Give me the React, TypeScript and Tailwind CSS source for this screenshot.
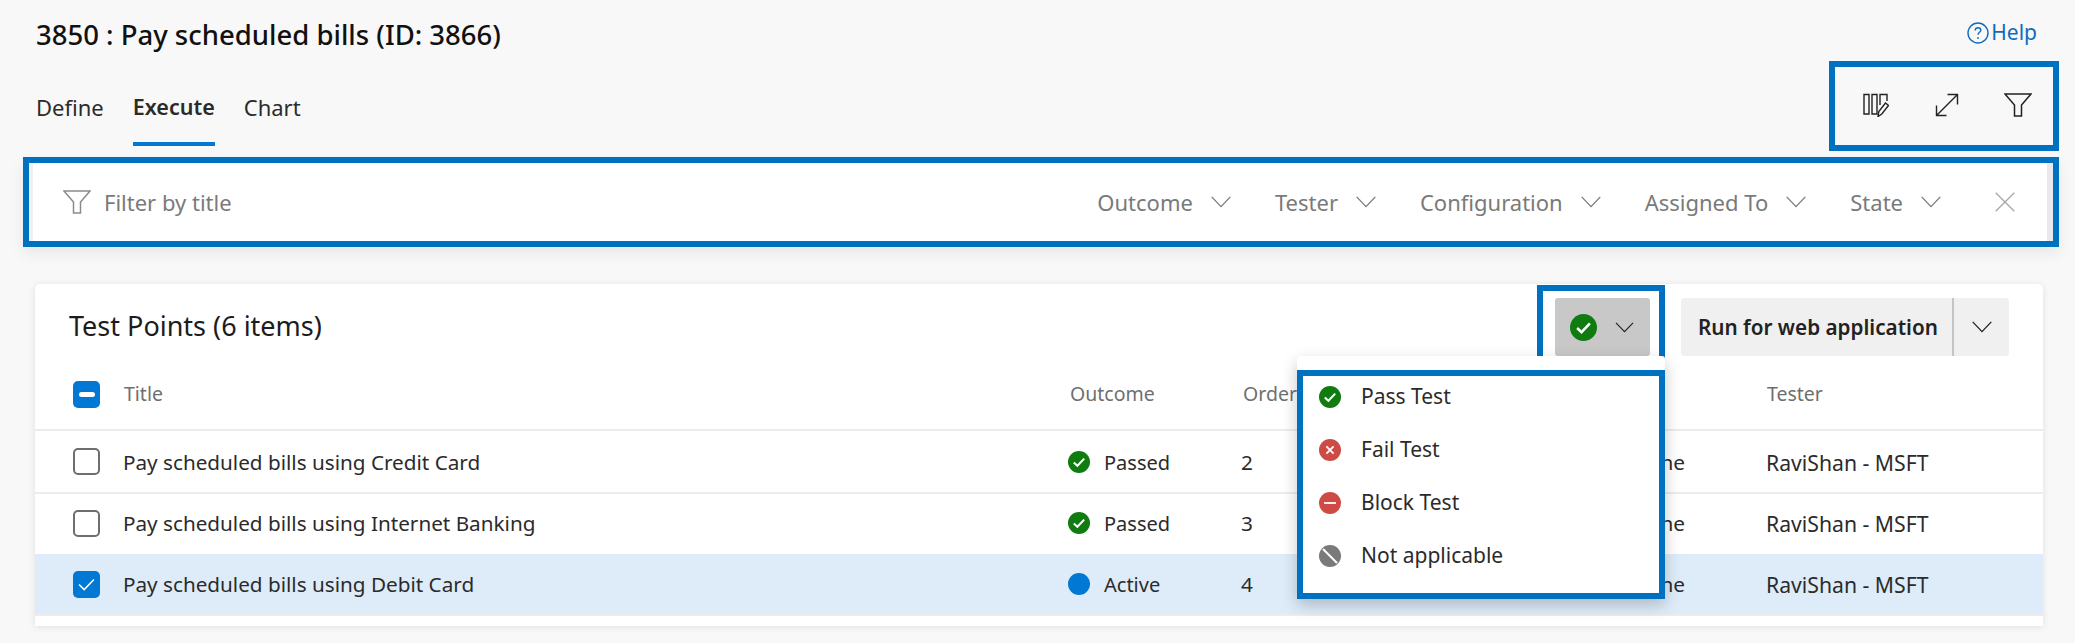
import React from "react";

const font = "font-['Noto_Sans','Open_Sans',sans-serif]";

function Chevron({ className = "" }: { className?: string }) {
  return (
    <svg viewBox="0 0 20 12" className={className} fill="none" stroke="currentColor" strokeWidth="1.3">
      <path d="M0.7 0.9 L10 10.6 L19.3 0.9" />
    </svg>
  );
}

function Funnel({ className = "" }: { className?: string }) {
  return (
    <svg viewBox="0 0 28 24" className={className} fill="none" stroke="currentColor" strokeWidth="1.5">
      <path d="M1 1 H27 L17.5 12 V23 H10.5 V12 Z" />
    </svg>
  );
}

function StatusIcon({ kind, className = "" }: { kind: "pass" | "fail" | "block" | "na" | "active"; className?: string }) {
  const fill = { pass: "#107c10", fail: "#cd4a45", block: "#cd4a45", na: "#7a7a7a", active: "#0078d4" }[kind];
  return (
    <svg viewBox="0 0 22 22" className={className}>
      <circle cx="11" cy="11" r="11" fill={fill} />
      {kind === "pass" && <path d="M5.8 11.4 L9.4 14.8 L16.2 7.6" fill="none" stroke="#fff" strokeWidth="2" />}
      {kind === "fail" && <path d="M7.4 7.4 L14.6 14.6 M14.6 7.4 L7.4 14.6" fill="none" stroke="#fff" strokeWidth="1.8" />}
      {kind === "block" && <path d="M5 11 H17" fill="none" stroke="#fff" strokeWidth="1.8" />}
      {kind === "na" && <path d="M4 4 L18 18" fill="none" stroke="#fff" strokeWidth="2" />}
    </svg>
  );
}

function FilterDrop({ label, className }: { label: string; className: string }) {
  return (
    <div className={`flex items-center ${className}`}>
      <span>{label}</span>
      <Chevron className="ml-[18px] w-[20px] h-[12px] text-[#7a7a7a]" />
    </div>
  );
}

const rows = [
  { title: "Pay scheduled bills using Credit Card", kind: "pass" as const, outcome: "Passed", order: "2", state: "none" },
  { title: "Pay scheduled bills using Internet Banking", kind: "pass" as const, outcome: "Passed", order: "3", state: "none" },
  { title: "Pay scheduled bills using Debit Card", kind: "active" as const, outcome: "Active", order: "4", state: "checked" },
];

const cols = "grid grid-cols-[51px_944px_173px_526px_1fr] pl-[38px] items-center";

export default function App() {
  return (
    <div className={`${font} relative w-[2075px] h-[643px] overflow-hidden bg-[#f8f8f8] text-[#201f1e]`}>
      <div className="flex justify-between pt-[20px] pl-[36px] pr-[38px] h-[61px]">
        <h1 className="text-[27.5px] leading-[30px] font-medium text-[#111]">3850 : Pay scheduled bills (ID: 3866)</h1>
        <div className="flex items-center h-[26px] text-[#0f6cbd] text-[21px] gap-[2px]">
          <svg viewBox="0 0 22 22" className="w-[22px] h-[22px]" fill="none" stroke="currentColor" strokeWidth="1.4">
            <circle cx="11" cy="11" r="10" />
            <path d="M8.2 8.4 C8.2 6.6 9.5 5.7 11 5.7 C12.6 5.7 13.8 6.7 13.8 8.2 C13.8 10.2 11 10.4 11 12.8" />
            <circle cx="11" cy="16" r="0.9" fill="currentColor" stroke="none" />
          </svg>
          <span>Help</span>
        </div>
      </div>

      <div className="flex justify-between h-[90px] pl-[36px] pr-[16px]">
        <div className="flex gap-[29px] text-[22px] leading-[30px] text-[#2b2b2b] h-[85px]">
          <div className="pt-[31px]">Define</div>
          <div className="pt-[31px] text-[21.5px] font-semibold border-b-[4px] border-[#0078d4]">Execute</div>
          <div className="pt-[31px]">Chart</div>
        </div>
        <div className="w-[230px] h-[90px] border-[6px] border-[#0070c0] flex items-center pl-[28px] pb-[2px] text-[#222]">
          <svg viewBox="0 0 26 24" className="w-[26px] h-[24px]" fill="none" stroke="currentColor" strokeWidth="1.4">
            <path d="M1 1.5 H6 V21 H1 Z M9 1.5 H14 V21 H9 Z M17 12 V1.5 H24 V8" />
            <path d="M15 23.5 L15.8 18.5 L22.5 10 L25.5 12.4 L18.8 21 Z" fill="#f8f8f8" />
          </svg>
          <svg viewBox="0 0 24 24" className="w-[24px] h-[24px] ml-[46px]" fill="none" stroke="currentColor" strokeWidth="1.4">
            <path d="M1.5 22.5 L22.5 1.5 M12.5 1.5 H22.5 V11.5 M1.5 12.5 V22.5 H11.5" />
          </svg>
          <Funnel className="w-[28px] h-[24px] ml-[45px]" />
        </div>
      </div>

      <div className="relative mt-[6px] ml-[23px] w-[2036px] h-[90px] border-[6px] border-[#0070c0] bg-white shadow-[0_6px_14px_rgba(0,0,0,0.07)] flex items-center text-[22px] text-[#7a7a7a]">
        <div className="w-[4px] self-stretch bg-[#f0f0f2]" />
        <Funnel className="ml-[30px] w-[28px] h-[24px] text-[#8a8a8a]" />
        <span className="ml-[13px]">Filter by title</span>
        <div className="flex items-center ml-auto mr-[32px]">
          <FilterDrop label="Outcome" className="" />
          <FilterDrop label="Tester" className="ml-[44px]" />
          <FilterDrop label="Configuration" className="ml-[44px]" />
          <FilterDrop label="Assigned To" className="ml-[44px]" />
          <FilterDrop label="State" className="ml-[44px]" />
          <svg viewBox="0 0 20 20" className="ml-[54px] w-[20px] h-[20px] text-[#a6a6a6]" fill="none" stroke="currentColor" strokeWidth="1.3">
            <path d="M0.7 0.7 L19.3 19.3 M19.3 0.7 L0.7 19.3" />
          </svg>
        </div>
        <div className="w-[6px] self-stretch bg-[#e9e9ec]" />
      </div>

      <div className="relative mt-[37px] ml-[35px] w-[2008px] h-[342px] rounded-t-[5px] bg-white shadow-[0_1px_7px_rgba(0,0,0,0.1)]">
        <div className="flex items-start h-[86px] pt-px pr-[34px]">
          <h2 className="ml-[34px] mt-[24px] text-[27px] leading-[34px] text-[#1c1c1c]">Test Points (6 items)</h2>
          <div className="ml-auto w-[128px] h-[85px] border-[6px] border-b-0 border-[#0070c0] pl-[12px] pt-[7px]">
            <div className="w-[95px] h-[58px] rounded-[3px] bg-[#c8c8c8] flex items-center pl-[15px]">
              <StatusIcon kind="pass" className="w-[27px] h-[27px]" />
              <Chevron className="ml-[18px] w-[19px] h-[11px] text-[#222]" />
            </div>
          </div>
          <div className="ml-[16px] mt-[13px] w-[328px] h-[58px] rounded-[3px] bg-[#f0f0f0] flex items-center">
            <div className="w-[273px] h-full border-r-2 border-[#c4c4c4] pl-[17px] pt-[2px] flex items-center text-[20.7px] font-semibold text-[#222]">
              Run for web application
            </div>
            <Chevron className="ml-[18px] w-[20px] h-[12px] text-[#222]" />
          </div>
        </div>

        <div className={`${cols} h-[61px] pb-[11px] text-[19.5px] text-[#6f6f6f] border-b-2 border-[#ececec]`}>
          <div className="w-[27px] h-[27px] rounded-[5px] bg-[#0078d4] flex items-center justify-center">
            <div className="w-[16px] h-[5px] rounded-full bg-white" />
          </div>
          <div>Title</div>
          <div className="pl-[2px]">Outcome</div>
          <div className="pl-[2px]">Order</div>
          <div>Tester</div>
        </div>

        {rows.map((r, i) => (
          <div
            key={r.title}
            className={`${cols} text-[20.8px] text-[#2b2b2b] border-b-2 ${i === 0 ? "h-[63px] border-[#ececec]" : i === 1 ? "h-[60px] border-transparent" : "h-[62px] border-[#ececec]"} ${r.state === "checked" ? "bg-[#deecf9]" : ""}`}
          >
            {r.state === "checked" ? (
              <div className="w-[27px] h-[27px] rounded-[5px] bg-[#0078d4] flex items-center justify-center">
                <svg viewBox="0 0 18 14" className="w-[17px] h-[13px]" fill="none" stroke="#fff" strokeWidth="1.6">
                  <path d="M1 7 L6.5 12.5 L17 1.5" />
                </svg>
              </div>
            ) : (
              <div className="w-[27px] h-[27px] rounded-[5px] border-2 border-[#6e6e6e] bg-white" />
            )}
            <div className="-ml-px pt-[2px] text-[20.7px]">{r.title}</div>
            <div className="flex items-center gap-[14px]">
              <StatusIcon kind={r.kind} className="w-[22px] h-[22px]" />
              <span className="pt-[2px] text-[20px]">{r.outcome}</span>
            </div>
            <div className="flex justify-between pt-[2px] pr-[82px]">
              <span>{r.order}</span>
              <span>Machine</span>
            </div>
            <div className="-ml-px pt-[2px] text-[21.2px]">RaviShan - MSFT</div>
          </div>
        ))}

        <div className="absolute left-[1262px] top-[72px] w-[368px] h-[243px] bg-white shadow-[0_6px_16px_rgba(0,0,0,0.22)] rounded-t-[3px]">
          <div className="mt-[14px] h-[229px] border-[6px] border-[#0070c0] bg-white flex flex-col pl-[16px] text-[21px] text-[#2b2b2b]">
            <div className="-mt-[6px]">
              {[
                { k: "pass" as const, t: "Pass Test" },
                { k: "fail" as const, t: "Fail Test" },
                { k: "block" as const, t: "Block Test" },
                { k: "na" as const, t: "Not applicable" },
              ].map((m) => (
                <div key={m.t} className="flex items-center h-[53px] gap-[20px]">
                  <StatusIcon kind={m.k} className="w-[22px] h-[22px]" />
                  <span>{m.t}</span>
                </div>
              ))}
            </div>
          </div>
        </div>
      </div>
    </div>
  );
}
